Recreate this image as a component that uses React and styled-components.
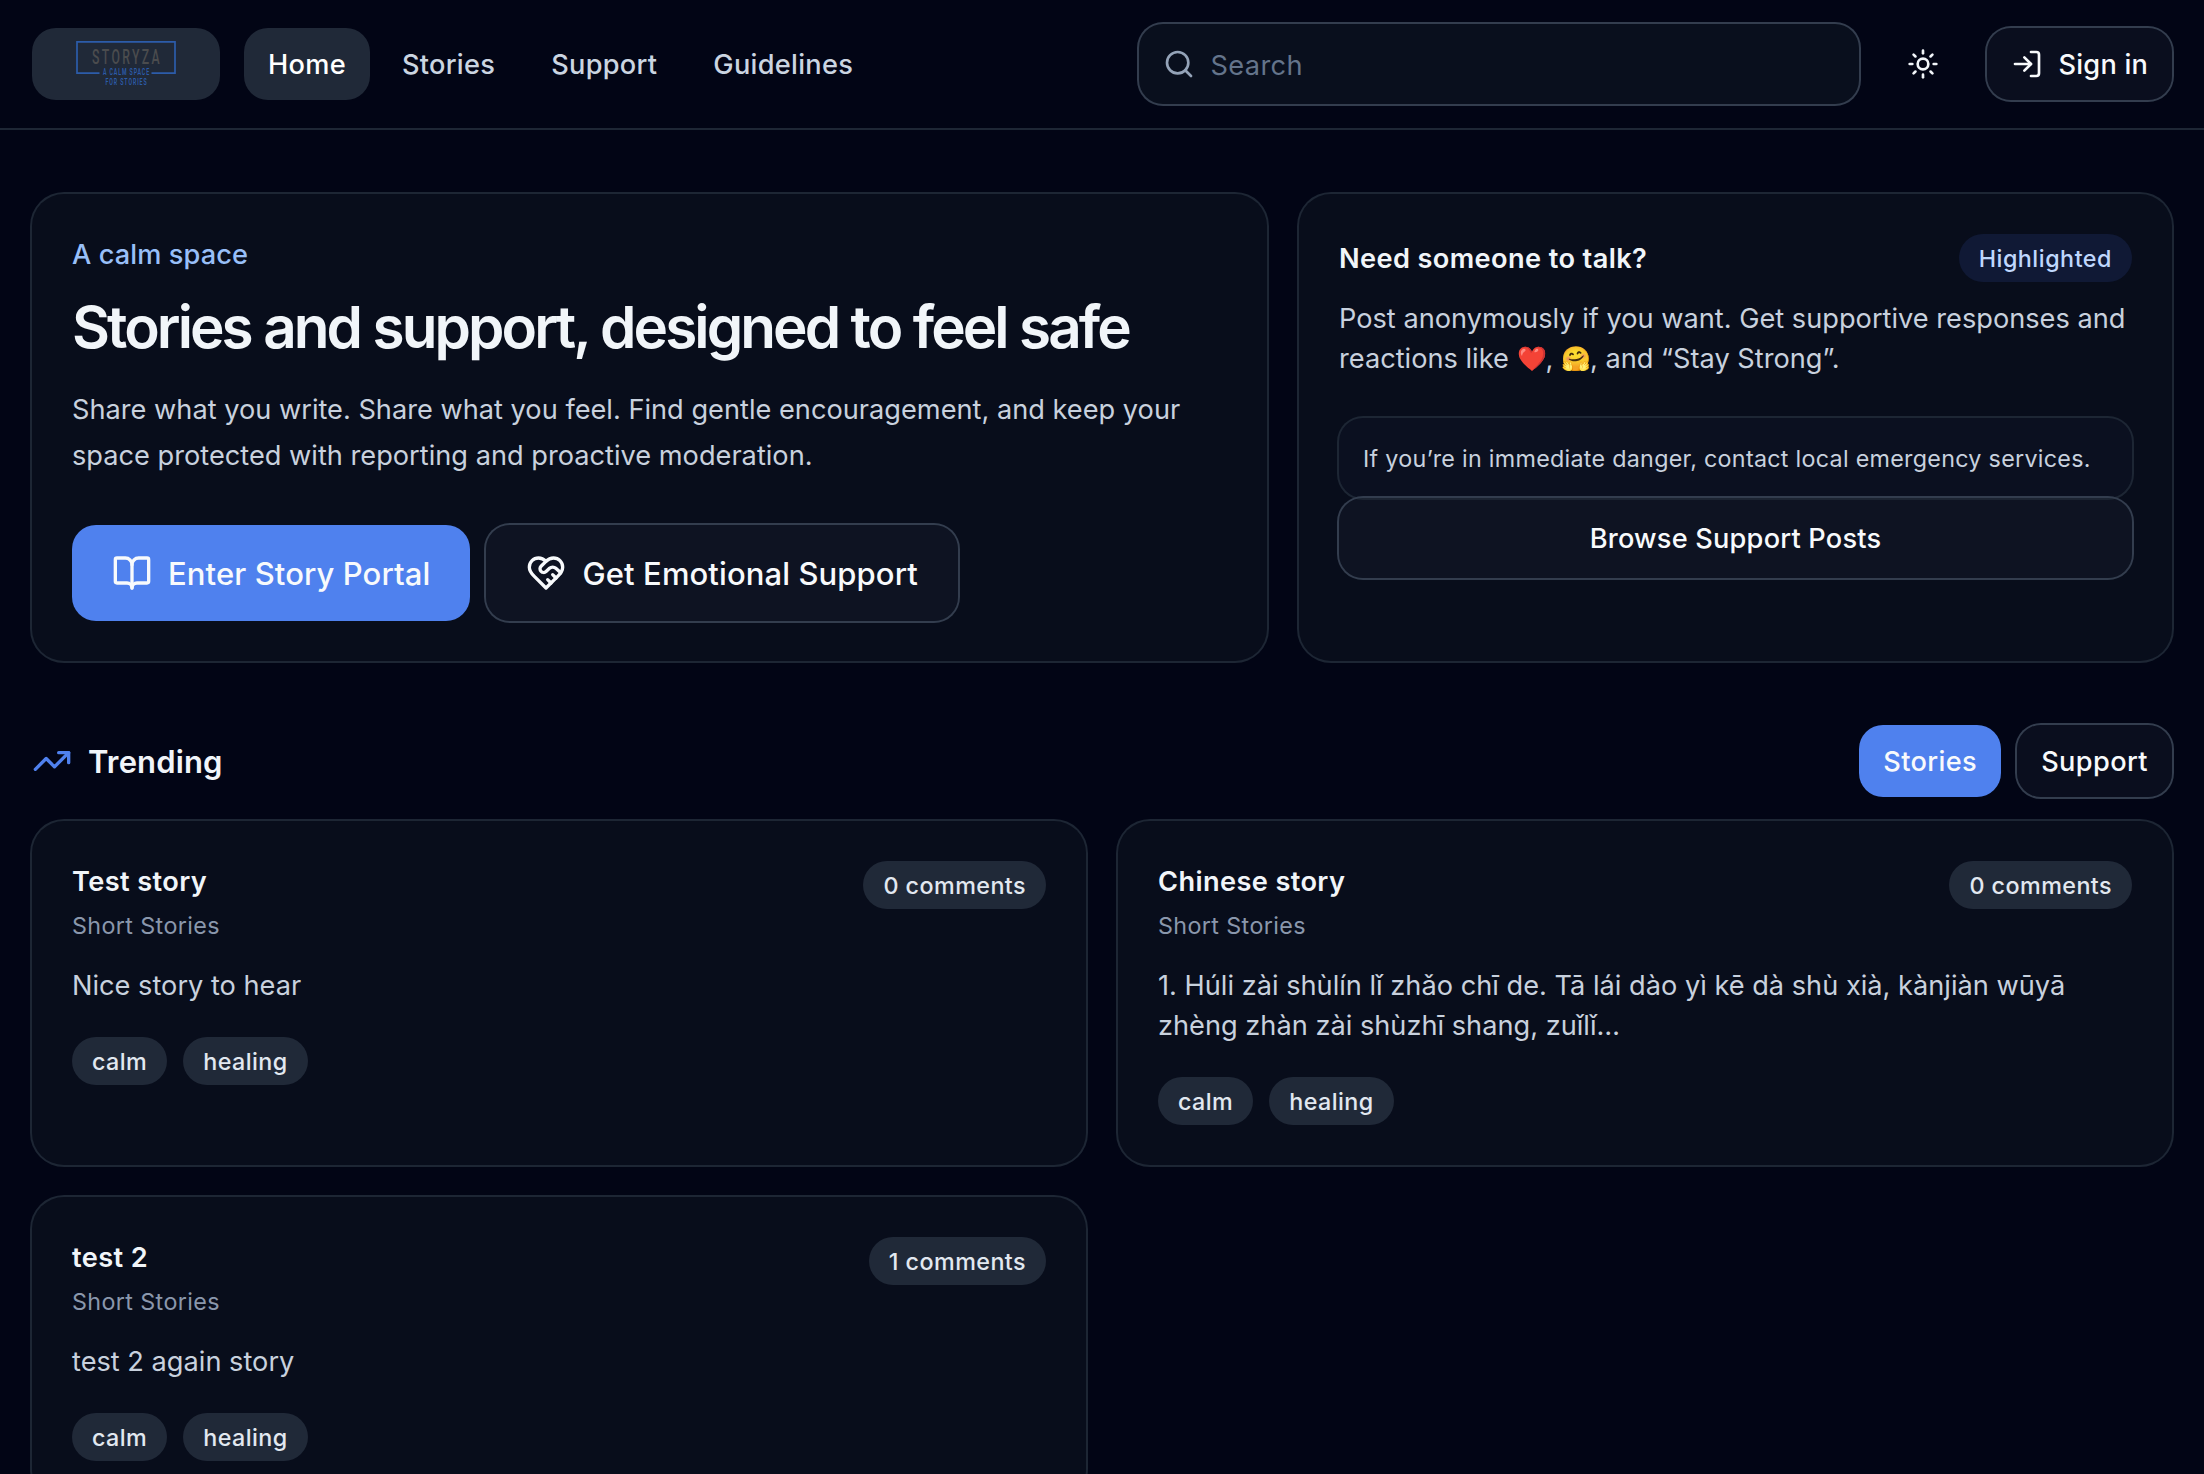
import styled, { createGlobalStyle, css } from 'styled-components'
import { BookOpen, LogIn, Search, Sun, TrendingUp } from 'lucide-react'

const GlobalStyle = createGlobalStyle`
  *, *::before, *::after {
    box-sizing: border-box;
  }

  body {
    margin: 0;
    background: #020515;
    color: #f1f5f9;
    font-family: Inter, "Noto Sans", sans-serif;
    font-size: 27.2px;
    line-height: 40px;
  }

  h1, h2, h3, p {
    margin: 0;
  }

  button {
    border: 0;
    font: inherit;
    cursor: pointer;
  }
`

// Inter sits a touch high in its line box
const baseline = css`
  padding-top: 1px;
  margin-bottom: -1px;
`

const Page = styled.div`
  height: 100vh;
  overflow: hidden;
`

const Header = styled.header`
  display: flex;
  align-items: center;
  height: 130px;
  padding: 0 32px;
  border-bottom: 2px solid #1e2735;
`

const LogoLink = styled.a`
  display: flex;
  width: 188px;
  height: 72px;
  margin-right: 24px;
  border-radius: 24px;
  background: #202938;
`

const Nav = styled.nav`
  display: flex;
  gap: 8px;
`

const NavLink = styled.a`
  padding: 17px 24px 15px;
  border-radius: 24px;
  color: ${({ $active }) => ($active ? '#ffffff' : '#cbd5e1')};
  background: ${({ $active }) => ($active ? '#202938' : 'transparent')};
  font-weight: 500;
  letter-spacing: 0.28px;
`

const SearchBox = styled.label`
  display: flex;
  align-items: center;
  gap: 16px;
  width: 720px;
  height: 80px;
  margin-left: auto;
  padding: 0 24px;
  border-radius: 24px;
  background: #090f1d;
  box-shadow: 0 0 0 2px #333d4e;
  color: #94a3b8;

  input {
    flex: 1;
    min-width: 0;
    padding: 3px 0 0;
    border: 0;
    outline: 0;
    background: none;
    color: #f1f5f9;
    font: inherit;
    letter-spacing: 0.35px;

    &::placeholder {
      color: #64748b;
      opacity: 1;
    }
  }
`

const IconButton = styled.button`
  display: flex;
  align-items: center;
  justify-content: center;
  width: 72px;
  height: 72px;
  margin: 0 28px;
  border-radius: 24px;
  background: none;
  color: #f1f5f9;
`

const Button = styled.button`
  display: flex;
  align-items: center;
  justify-content: center;
  gap: 16px;
  height: 72px;
  padding: 0 24px;
  border-radius: 24px;
  color: #f8fafc;
  font-weight: 500;
  letter-spacing: ${({ $wide }) => ($wide ? '0.38px' : '0.2px')};
  white-space: nowrap;

  ${({ $primary }) =>
    $primary
      ? css`
          background: #4f81ee;
        `
      : css`
          background: rgba(26, 33, 50, 0.33);
          box-shadow: 0 0 0 2px #333d4e;
        `}

  ${({ $size }) =>
    $size === 'lg' &&
    css`
      height: 96px;
      padding: 0 40px;
      font-size: 31px;
      letter-spacing: 0.1px;
    `}

  ${({ $block }) =>
    $block &&
    css`
      width: 100%;
      height: 80px;
    `}
`

const Label = styled.span`
  padding-top: 2px;
`

const Main = styled.main`
  padding: 64px 32px;
`

const Hero = styled.section`
  display: grid;
  grid-template-columns: 1235px 1fr;
  gap: 32px;
`

const Card = styled.article`
  padding: 40px;
  border-radius: 32px;
  background: #080d1b;
  box-shadow: 0 0 0 2px #1d2634;
`

const Eyebrow = styled.p`
  ${baseline}
  color: #98bff8;
  font-weight: 500;
  letter-spacing: 0.1px;
`

const Headline = styled.h1`
  ${baseline}
  margin-top: 16px;
  font-size: 58.4px;
  font-weight: 600;
  line-height: 72px;
  letter-spacing: -2.92px;
  word-spacing: 0.6px;
  white-space: nowrap;
`

const Lead = styled.p`
  ${baseline}
  margin-top: 24px;
  color: #c8d1de;
  line-height: 45.5px;
`

const Actions = styled.div`
  display: flex;
  gap: 16px;
  margin-top: 48px;
`

const CardHead = styled.div`
  display: flex;
  align-items: ${({ $center }) => ($center ? 'center' : 'flex-start')};
  justify-content: space-between;
`

const CardTitle = styled.h3`
  ${baseline}
  font-size: 27.2px;
  font-weight: 600;
  letter-spacing: 0.38px;
`

const Badge = styled.span`
  padding: 9px 20px 7px;
  border-radius: 24px;
  background: ${({ $accent }) => ($accent ? '#101935' : '#202938')};
  color: ${({ $accent }) => ($accent ? '#bfd7fd' : '#e2e8f0')};
  font-size: 23.3px;
  font-weight: 500;
  line-height: 32px;
  letter-spacing: ${({ $accent }) => ($accent ? '0.52px' : '0.44px')};
`

const Text = styled.p`
  ${baseline}
  margin-top: ${({ $tight }) => ($tight ? '16px' : '24px')};
  color: #c8d1de;
`

const Emoji = styled.span`
  display: inline-block;
  margin-right: -1px;
  font-size: 24px;
  line-height: 1;
  vertical-align: 1px;
`

const Notice = styled.div`
  margin-top: 40px;
  padding: 25px 24px 23px;
  border-radius: 24px;
  background: #0b1020;
  box-shadow: 0 0 0 2px #1d2634;
  color: #c8d1de;
  font-size: 23.3px;
  line-height: 32px;
  letter-spacing: 0.28px;
`

const SectionHead = styled.div`
  display: flex;
  align-items: center;
  justify-content: space-between;
  margin: 64px 0 24px;
`

const SectionTitle = styled.h2`
  display: flex;
  align-items: center;
  gap: 16px;
  font-size: 31px;
  font-weight: 600;
  letter-spacing: 0.15px;

  svg {
    color: #4f81ee;
  }
`

const Tabs = styled.div`
  display: flex;
  gap: 16px;
`

const StoryGrid = styled.section`
  display: grid;
  grid-template-columns: repeat(2, 1fr);
  gap: 32px;
`

const Category = styled.p`
  ${baseline}
  margin-top: 8px;
  color: #8a97ac;
  font-size: 23.3px;
  line-height: 32px;
  letter-spacing: 0.38px;
`

const Tags = styled.div`
  display: flex;
  gap: 16px;
  margin-top: 32px;
`

const Logo = () => (
  <svg width="188" height="72" viewBox="0 0 188 72" role="img" aria-label="Storyza">
    <path d="M67.5 45.2H45V13.8h98v31.4h-23.5" fill="none" stroke="#2c5caa" strokeWidth="1.7" />
    <g fontFamily="Roboto, sans-serif">
      <text
        x="60"
        y="35.8"
        fontSize="20.8"
        fontWeight="500"
        letterSpacing="4"
        fill="#4b4c4e"
        textLength="70"
        lengthAdjust="spacingAndGlyphs"
      >
        STORYZA
      </text>
      <g fill="#2c5caa" fontSize="8.2" fontWeight="600" letterSpacing="1.4">
        <text x="71" y="47.2" textLength="47" lengthAdjust="spacingAndGlyphs">A CALM SPACE</text>
        <text x="73.5" y="57.2" textLength="42" lengthAdjust="spacingAndGlyphs">FOR STORIES</text>
      </g>
    </g>
  </svg>
)

const HeartHandshake = () => (
  <svg
    width="40"
    height="40"
    viewBox="0 0 24 24"
    fill="none"
    stroke="currentColor"
    strokeWidth="2"
    strokeLinecap="round"
    strokeLinejoin="round"
  >
    <path d="M19 14c1.49-1.46 3-3.21 3-5.5A5.5 5.5 0 0 0 16.5 3c-1.76 0-3 .5-4.5 2-1.5-1.5-2.74-2-4.5-2A5.5 5.5 0 0 0 2 8.5c0 2.3 1.5 4.05 3 5.5l7 7Z" />
    <path d="M12 5 9.04 7.96a2.17 2.17 0 0 0 0 3.08c.82.82 2.13.85 3 .07l2.07-1.9a2.82 2.82 0 0 1 3.79 0l2.96 2.66" />
    <path d="m18 15-2-2" />
    <path d="m15 18-2-2" />
  </svg>
)

const navItems = ['Home', 'Stories', 'Support', 'Guidelines']

const stories = [
  {
    title: 'Test story',
    category: 'Short Stories',
    comments: 0,
    excerpt: 'Nice story to hear',
    tags: ['calm', 'healing'],
  },
  {
    title: 'Chinese story',
    category: 'Short Stories',
    comments: 0,
    excerpt:
      '1. Húli zài shùlín lǐ zhǎo chī de. Tā lái dào yì kē dà shù xià, kànjiàn wūyā zhèng zhàn zài shùzhī shang, zuǐlǐ…',
    tags: ['calm', 'healing'],
  },
  {
    title: 'test 2',
    category: 'Short Stories',
    comments: 1,
    excerpt: 'test 2 again story',
    tags: ['calm', 'healing'],
  },
]

const StoryCard = ({ story }) => (
  <Card>
    <CardHead>
      <div>
        <CardTitle>{story.title}</CardTitle>
        <Category>{story.category}</Category>
      </div>
      <Badge>{story.comments} comments</Badge>
    </CardHead>
    <Text>{story.excerpt}</Text>
    <Tags>
      {story.tags.map((tag) => (
        <Badge key={tag}>{tag}</Badge>
      ))}
    </Tags>
  </Card>
)

export default function App() {
  return (
    <Page>
      <GlobalStyle />
      <Header>
        <LogoLink>
          <Logo />
        </LogoLink>
        <Nav>
          {navItems.map((item) => (
            <NavLink key={item} $active={item === 'Home'}>
              {item}
            </NavLink>
          ))}
        </Nav>
        <SearchBox>
          <Search size={32} />
          <input placeholder="Search" />
        </SearchBox>
        <IconButton aria-label="Toggle theme">
          <Sun size={32} />
        </IconButton>
        <Button>
          <LogIn size={32} />
          <Label>Sign in</Label>
        </Button>
      </Header>

      <Main>
        <Hero>
          <Card>
            <Eyebrow>A calm space</Eyebrow>
            <Headline>Stories and support, designed to feel safe</Headline>
            <Lead>
              Share what you write. Share what you feel. Find gentle encouragement, and keep your space
              protected with reporting and proactive moderation.
            </Lead>
            <Actions>
              <Button $primary $size="lg">
                <BookOpen size={40} />
                <Label>Enter Story Portal</Label>
              </Button>
              <Button $size="lg">
                <HeartHandshake />
                <Label>Get Emotional Support</Label>
              </Button>
            </Actions>
          </Card>

          <Card>
            <CardHead $center>
              <CardTitle>Need someone to talk?</CardTitle>
              <Badge $accent>Highlighted</Badge>
            </CardHead>
            <Text $tight>
              Post anonymously if you want. Get supportive responses and reactions like <Emoji>❤️</Emoji>,{' '}
              <Emoji>🤗</Emoji>, and “Stay Strong”.
            </Text>
            <Notice>If you’re in immediate danger, contact local emergency services.</Notice>
            <Button $block>
              <Label>Browse Support Posts</Label>
            </Button>
          </Card>
        </Hero>

        <SectionHead>
          <SectionTitle>
            <TrendingUp size={40} />
            <Label>Trending</Label>
          </SectionTitle>
          <Tabs>
            <Button $primary $wide>
              <Label>Stories</Label>
            </Button>
            <Button $wide>
              <Label>Support</Label>
            </Button>
          </Tabs>
        </SectionHead>

        <StoryGrid>
          {stories.map((story) => (
            <StoryCard key={story.title} story={story} />
          ))}
        </StoryGrid>
      </Main>
    </Page>
  )
}
